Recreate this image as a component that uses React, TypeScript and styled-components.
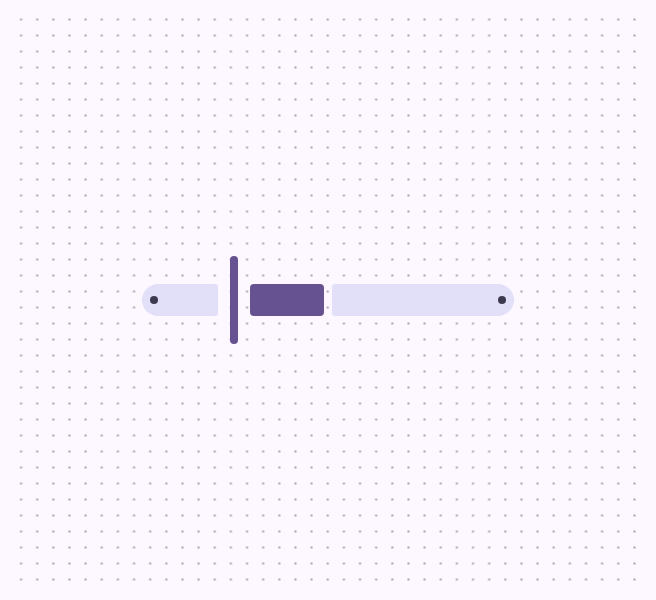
import styled, { createGlobalStyle } from 'styled-components';

const GlobalStyle = createGlobalStyle`
  html, body {
    margin: 0;
    padding: 0;
    background: #fdf7ff;
    font-family: 'Inter', 'Liberation Sans', sans-serif;
  }
`;

const Page = styled.div`
  box-sizing: border-box;
  width: 656px;
  height: 600px;
  padding: 12px 13px;
  background: #fdf7ff;
`;

// dotted canvas, 39 x 36 dots
const Canvas = styled.div`
  display: flex;
  align-items: center;
  justify-content: center;
  width: 100%;
  height: 100%;
  background-image: radial-gradient(circle, #a7a2ae 0.9px, transparent 1.3px);
  background-size: calc(100% / 39) 16px;
  background-position: 0 -0.5px;
`;

const Track = styled.div`
  display: flex;
  align-items: center;
`;

interface PillProps {
  side: 'left' | 'right';
  width: number;
}

const Pill = styled.div<PillProps>`
  display: flex;
  align-items: center;
  justify-content: ${({ side }) => (side === 'left' ? 'flex-start' : 'flex-end')};
  box-sizing: border-box;
  width: ${({ width }) => width}px;
  height: 32px;
  padding: 0 8px;
  background: #e1e0f8;
  border-radius: ${({ side }) => (side === 'left' ? '16px 3px 3px 16px' : '3px 16px 16px 3px')};
`;

const StopDot = styled.span`
  width: 8px;
  height: 8px;
  border-radius: 50%;
  background: #3d3a50;
`;

const Handle = styled.div`
  width: 8px;
  height: 88px;
  margin: 0 12px;
  border-radius: 4px;
  background: #665191;
`;

const ActiveBlock = styled.div`
  width: 74px;
  height: 32px;
  margin-right: 8px;
  border-radius: 4px;
  background: #665191;
`;

const App = () => (
  <>
    <GlobalStyle />
    <Page>
      <Canvas>
        <Track>
          <Pill side="left" width={76}>
            <StopDot />
          </Pill>
          <Handle />
          <ActiveBlock />
          <Pill side="right" width={182}>
            <StopDot />
          </Pill>
        </Track>
      </Canvas>
    </Page>
  </>
);

export default App;
